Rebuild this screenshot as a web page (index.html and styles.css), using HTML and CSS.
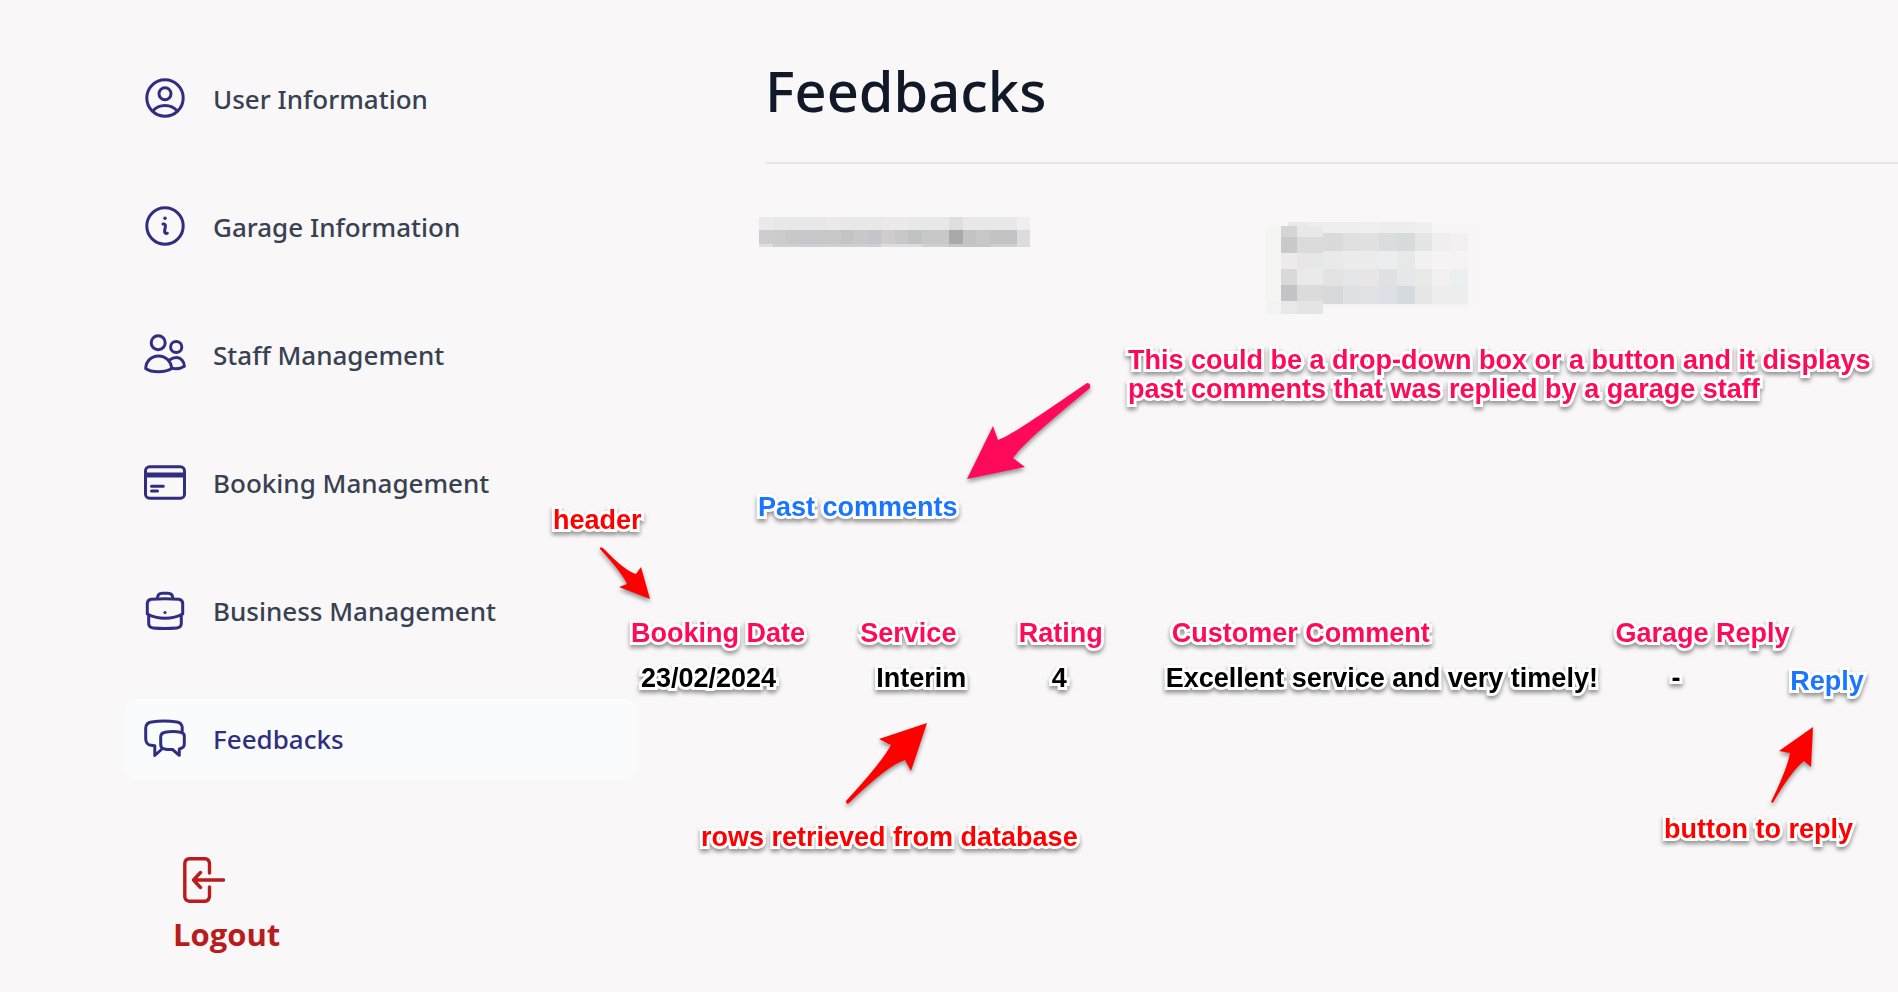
FILE: index.html
```html
<!DOCTYPE html>
<html lang="en">
<head>
<meta charset="utf-8">
<title>Feedbacks</title>
<link rel="stylesheet" href="styles.css">
</head>
<body>
<div class="layout">
  <aside class="sidebar">
    <nav class="menu">
      <a class="item" href="#user">
        <svg class="icon" viewBox="0 0 42 42"><circle cx="21" cy="20" r="18.2"/><circle cx="21" cy="15.7" r="6"/><path d="M8.7 33C15 25.600 27 25.600 33.300 33"/></svg>
        <span>User Information</span>
      </a>
      <a class="item" href="#garage">
        <svg class="icon" viewBox="0 0 42 42"><circle cx="21" cy="20" r="18.2"/><circle class="dot" cx="21" cy="12.300" r="1.700"/><path d="M19 18H19.800Q21.800 18.200 21.400 20.500L20.600 25Q20.500 27.400 22.500 27.400L23.300 27.200"/></svg>
        <span>Garage Information</span>
      </a>
      <a class="item" href="#staff">
        <svg class="icon" viewBox="0 0 42 42"><circle cx="14.200" cy="8.700" r="7"/><circle cx="32.200" cy="13" r="5.600"/><path d="M1.700 34.500C2 27 7.500 22 14.500 22S27 27 27.700 34.500C24 37 19 37.700 14.500 37.700S5 37 1.700 34.500Z"/><path d="M25.500 26C28 24.200 30 23.600 32.500 23.600C37 23.600 40.300 27.500 40.400 32.200C37 34.500 32 35 27.700 34.300"/></svg>
        <span>Staff Management</span>
      </a>
      <a class="item" href="#booking">
        <svg class="icon" viewBox="0 0 42 42"><rect x="1.500" y="4.800" width="39" height="31.400" rx="4"/><path class="band" d="M2 13H40"/><path d="M7.500 24.300H19.300M7.500 29H13.500"/></svg>
        <span>Booking Management</span>
      </a>
      <a class="item" href="#business">
        <svg class="icon" viewBox="0 0 42 42"><path d="M13.500 8.500V7.500Q14 3.300 18 3.200H24Q28.500 3.300 28.700 7.500V8.500"/><path d="M7 9.300Q21 8.300 35 9.300Q38.700 10 38.700 13.500V24Q31 28.300 21 28.300T3.300 24V13.500Q3.500 10 7 9.300Z"/><path d="M4.700 25V34Q5 37.600 9 38Q21 39 33 38Q37 37.600 37.300 34V25"/><circle class="dot" cx="21" cy="22.500" r="1.600"/></svg>
        <span>Business Management</span>
      </a>
      <a class="item active" href="#feedbacks" aria-current="page">
        <svg class="icon" viewBox="0 0 42 42"><path d="M38.200 13V9Q37.500 4.800 33 4Q20 2 7.500 4Q2 4.800 1.700 10V21Q2 26.700 7 27.300L10.800 27.700V37.500L18.500 30.500"/><path d="M21 14.200Q29 13 36.500 14.200Q40.300 14.800 40.300 18V26Q40.300 29.800 36 30.700L35.300 30.900V37.300L28.500 31.500Q24 31.700 20.500 31Q16.700 30.300 16.700 26.500V18.500Q17 14.800 21 14.200Z"/></svg>
        <span>Feedbacks</span>
      </a>
    </nav>
    <button class="logout" type="button">
      <svg class="logout-icon" viewBox="0 0 42 46"><path d="M26.500 16V6.500Q26 2 22 1.800H6.500Q2 2 1.800 6.500V39.500Q2 44 6.500 44.200H22Q26 44 26.500 39.500V30"/><path d="M40.500 23H10.500M17.500 15.500L10.500 23L17.500 30.500"/></svg>
      <span>Logout</span>
    </button>
  </aside>

  <main class="main">
    <h1 class="title">Feedbacks</h1>
    <div class="summary">
      <svg class="mosaic-name" viewBox="0 0 271 30" shape-rendering="crispEdges">
        <rect width="271" height="13" fill="#e8e8e8"/><rect width="14" height="13" fill="#ebe9ea"/><rect x="68" width="14" height="13" fill="#ebe9ea"/><rect x="122" width="27" height="13" fill="#ebe9ea"/><rect x="190" width="14" height="13" fill="#dedede"/><rect x="204" width="13" height="13" fill="#e9e7e8"/><rect x="258" width="13" height="13" fill="#f0eef0"/>
        <rect y="13" width="271" height="14" fill="#c8c8c9"/><rect y="13" width="14" height="14" fill="#cdcdcf"/><rect x="14" y="13" width="13" height="14" fill="#cbcccd"/><rect x="41" y="13" width="27" height="14" fill="#c7c6cb"/><rect x="82" y="13" width="13" height="14" fill="#c3c4c5"/><rect x="109" y="13" width="13" height="14" fill="#c3c5ca"/><rect x="122" y="13" width="14" height="14" fill="#d0cccd"/><rect x="149" y="13" width="14" height="14" fill="#c0c2c6"/><rect x="190" y="13" width="14" height="14" fill="#a8a9ad"/><rect x="204" y="13" width="13" height="14" fill="#c2c4c5"/><rect x="231" y="13" width="27" height="14" fill="#c2c3c4"/><rect x="258" y="13" width="13" height="14" fill="#dcdbdd"/>
        <rect y="27" width="271" height="3" fill="#cfcfd0"/><rect y="27" width="14" height="3" fill="#dfdee0"/><rect x="122" y="27" width="41" height="3" fill="#dddde0"/><rect x="190" y="27" width="41" height="3" fill="#c6c6c6"/><rect x="258" y="27" width="13" height="3" fill="#dcdbdd"/>
      </svg>
      <svg class="mosaic-detail" viewBox="0 0 214 92" shape-rendering="crispEdges">
        <g fill="#eeeeee"><rect x="22" width="19" height="4" fill="#e8e9e8"/><rect x="41" width="16" height="4" fill="#efeeee"/><rect x="57" width="36" height="11"/><rect x="93" width="20" height="11" fill="#f0eeef"/><rect x="113" width="36" height="11" fill="#ecedec"/><rect x="149" width="17" height="11" fill="#f0f0ee"/><rect x="166" width="48" height="11" fill="#f7f5f6"/></g>
        <path fill="#f5f5f2" d="M0 4H15V79H0Z"/><path fill="#f4f3f4" d="M0 79H15V92H0Z"/>
        <path fill="#d5d5d5" d="M15 4H31V15H15Z"/><path fill="#e8e8e8" d="M31 4H57V15H31Z"/>
        <path fill="#c9c9cb" d="M15 15H31V31H15Z"/><path fill="#dadbda" d="M31 15H57V31H31Z"/>
        <path fill="#edebec" d="M15 31H31V47H15Z"/><path fill="#e8e6e7" d="M31 31H48V47H31Z"/><path fill="#e5e8e6" d="M48 31H57V47H48Z"/>
        <path fill="#d9d9d8" d="M15 47H31V63H15Z"/><path fill="#ebeaea" d="M31 47H57V63H31Z"/>
        <path fill="#c4c4c7" d="M15 63H31V79H15Z"/><path fill="#dadbda" d="M31 63H57V79H31Z"/>
        <path fill="#e9e8e9" d="M15 79H31V92H15Z"/><path fill="#e5e4e4" d="M31 79H48V92H31Z"/><path fill="#e3e6e4" d="M48 79H57V92H48Z"/>
        <path fill="#d9dad9" d="M57 11H77V29H57Z"/><path fill="#dfe0e2" d="M77 11H95V29H77Z"/><path fill="#e0e1e1" d="M95 11H113V29H95Z"/><path fill="#dadce0" d="M113 11H131V29H113Z"/><path fill="#d6dbde" d="M131 11H149V29H131Z"/><path fill="#e4e5e5" d="M149 11H166V29H149Z"/><path fill="#eeefee" d="M166 11H184V29H166Z"/><path fill="#f2f0f1" d="M184 11H202V29H184Z"/>
        <path fill="#e8e9e8" d="M57 29H77V47H57Z"/><path fill="#eeebec" d="M77 29H95V47H77Z"/><path fill="#edecec" d="M95 29H113V47H95Z"/><path fill="#ecedef" d="M113 29H131V47H113Z"/><path fill="#e7e8e7" d="M131 29H149V47H131Z"/><path fill="#f2f0f1" d="M149 29H166V47H149Z"/><path fill="#f5f3f4" d="M166 29H202V47H166Z"/>
        <path fill="#e3e3e3" d="M57 47H77V64H57Z"/><path fill="#e5e6e9" d="M77 47H95V64H77Z"/><path fill="#e7e6e4" d="M95 47H113V64H95Z"/><path fill="#e1e1e3" d="M113 47H131V64H113Z"/><path fill="#e5e8ea" d="M131 47H149V64H131Z"/><path fill="#e9e9e6" d="M149 47H166V64H149Z"/><path fill="#f2f0f1" d="M166 47H184V64H166Z"/><path fill="#eceff1" d="M184 47H202V64H184Z"/>
        <path fill="#d7dadb" d="M57 64H77V82H57Z"/><path fill="#e0e1e3" d="M77 64H95V82H77Z"/><path fill="#e0e3e4" d="M95 64H113V82H95Z"/><path fill="#dde0e6" d="M113 64H131V82H113Z"/><path fill="#d5dade" d="M131 64H149V82H131Z"/><path fill="#e5e6e6" d="M149 64H166V82H149Z"/><path fill="#ededee" d="M166 64H202V82H166Z"/>
        <path fill="#f5f3f4" d="M57 82H202V86H57Z"/><path fill="#f8f6f7" d="M202 11H214V86H202Z"/>
      </svg>
    </div>

    <button class="past note blue" type="button">Past comments</button>

    <table class="feedback note">
      <colgroup><col class="c-date"><col class="c-service"><col class="c-rating"><col class="c-comment"><col class="c-reply"><col class="c-action"></colgroup>
      <thead>
        <tr><th>Booking Date</th><th>Service</th><th>Rating</th><th class="th-comment">Customer Comment</th><th>Garage Reply</th><td></td></tr>
      </thead>
      <tbody>
        <tr><td class="date">23/02/2024</td><td class="service">Interim</td><td class="rating">4</td><td>Excellent service and very timely!</td><td class="reply">-</td><td><button class="reply-button blue" type="button">Reply</button></td></tr>
      </tbody>
    </table>

    <p class="callout note pink at-past">This could be a drop-down box or a button and it displays<br>past comments that was replied by a garage staff</p>
    <p class="callout note red at-header">header</p>
    <p class="callout note red at-rows">rows retrieved from database</p>
    <p class="callout note red at-reply">button to reply</p>
    <svg class="arrow pink arrow-past" viewBox="0 0 140 115"><path d="M7 104L33 51L38 65C55 58 80 40 127 8Q131 8 130 13C90 46 62 70 53 83L65 92Z"/></svg>
    <svg class="arrow red arrow-header" viewBox="0 0 65 70"><path d="M5 8Q6 6 9 9Q30 31 41 34L46 27L55 59L24 47L32 44Q28 34 5 9Z"/></svg>
    <svg class="arrow red arrow-rows" viewBox="0 0 100 100"><path d="M87 7L39 23L51 29Q42 46 6 85Q6 89 9 87Q48 49 65 44L71 55Z"/></svg>
    <svg class="arrow red arrow-reply" viewBox="0 0 65 95"><path d="M48 6L14 30L25 32Q23 46 6 81Q8 83 9 80Q27 49 39 40L46 46Z"/></svg>
  </main>
</div>
</body>
</html>
```
FILE: styles.css
```css
* { box-sizing: border-box; }

body {
  margin: 0;
  min-height: 100vh;
  background: #f9f7f8;
  font-family: "Noto Sans", "Open Sans", sans-serif;
  overflow-x: hidden;
}

button {
  border: 0;
  padding: 0;
  background: none;
  font: inherit;
  cursor: pointer;
}

.layout {
  display: grid;
  grid-template-columns: 637px minmax(0, 1fr);
}

/* Sidebar */
.sidebar { padding: 59px 0 0 125px; }

.menu {
  display: flex;
  flex-direction: column;
  gap: 48px;
}

.item {
  display: flex;
  align-items: center;
  gap: 27px;
  height: 80px;
  padding: 0 19px;
  border-radius: 12px;
  color: #374151;
  font-size: 26px;
  font-weight: 500;
  text-decoration: none;
}

.item.active {
  background: #f9fbfd;
  color: #312e81;
}

.icon {
  width: 42px;
  height: 42px;
  fill: none;
  stroke: #312e81;
  stroke-width: 3;
  stroke-linecap: round;
  stroke-linejoin: round;
}

.icon .dot { fill: #312e81; stroke: none; }
.icon .band { stroke-width: 5; stroke-linecap: butt; }

.logout {
  display: flex;
  flex-direction: column;
  gap: 11px;
  margin: 78px 0 0 48px;
  color: #b91c1c;
  font-family: "Open Sans", "Noto Sans", sans-serif;
  font-size: 31px;
  font-weight: 700;
  line-height: 40px;
}

.logout-icon {
  width: 42px;
  height: 46px;
  margin-left: 10px;
  fill: none;
  stroke: #b91c1c;
  stroke-width: 3.4;
  stroke-linecap: round;
  stroke-linejoin: round;
}

/* Main column */
.main {
  position: relative;
  margin-left: -6px;
}

.title {
  margin: 0 0 0 134px;
  padding: 50px 0 32px;
  border-bottom: 2px solid #e5e7eb;
  color: #111827;
  font-size: 56px;
  font-weight: 500;
  line-height: 80px;
}

.summary {
  display: flex;
  align-items: flex-start;
  gap: 236px;
  padding: 53px 0 0 128px;
}

.mosaic-name { width: 271px; height: 30px; }
.mosaic-detail { width: 214px; height: 92px; margin-top: 5px; }

/* Outlined lettering */
.note {
  font-family: "Liberation Sans", Arial, sans-serif;
  font-size: 27px;
  font-weight: 700;
  line-height: 29px;
  -webkit-text-stroke: 6px #fff;
  paint-order: stroke fill;
  stroke-linejoin: round;
  filter: drop-shadow(0 3px 2px rgba(0, 0, 0, 0.4));
}

.blue { color: #1a75ff; }
.pink { color: #ff0a5a; fill: #ff0a5a; }
.red { color: #ff0000; fill: #ff0000; }

.past {
  display: block;
  margin: 179px 0 0 127px;
}

.feedback {
  width: 100%;
  margin-top: 89px;
  border-collapse: collapse;
  table-layout: fixed;
  color: #000;
  text-align: left;
  white-space: nowrap;
}

.feedback th,
.feedback td { padding: 8px 0; vertical-align: top; }
.feedback th { color: #ff0a5a; }
.feedback .th-comment { padding-left: 6px; }
.feedback .date { padding-left: 10px; }
.feedback .service { padding-left: 16px; }
.feedback .rating { padding-left: 33px; }
.feedback .reply { padding-left: 56px; }
.reply-button { margin-top: 3px; }

.c-date { width: 18.1%; }
.c-service { width: 12.5%; }
.c-rating { width: 11.6%; }
.c-comment { width: 35.5%; }
.c-reply { width: 13.8%; }

/* Callouts over the page */
.callout {
  position: absolute;
  margin: 0;
  white-space: nowrap;
}

.at-past { left: 497px; top: 346px; }
.at-header { left: -78px; top: 506px; }
.at-rows { left: 70px; top: 823px; }
.at-reply { left: 1033px; top: 815px; }

.arrow {
  position: absolute;
  overflow: visible;
  filter: drop-shadow(0 3px 2px rgba(0, 0, 0, 0.4));
}

.arrow-past { left: 329px; top: 375px; width: 140px; height: 115px; }
.arrow-header { left: -36px; top: 540px; width: 65px; height: 70px; }
.arrow-rows { left: 209px; top: 716px; width: 100px; height: 100px; }
.arrow-reply { left: 1134px; top: 721px; width: 65px; height: 95px; }
```
